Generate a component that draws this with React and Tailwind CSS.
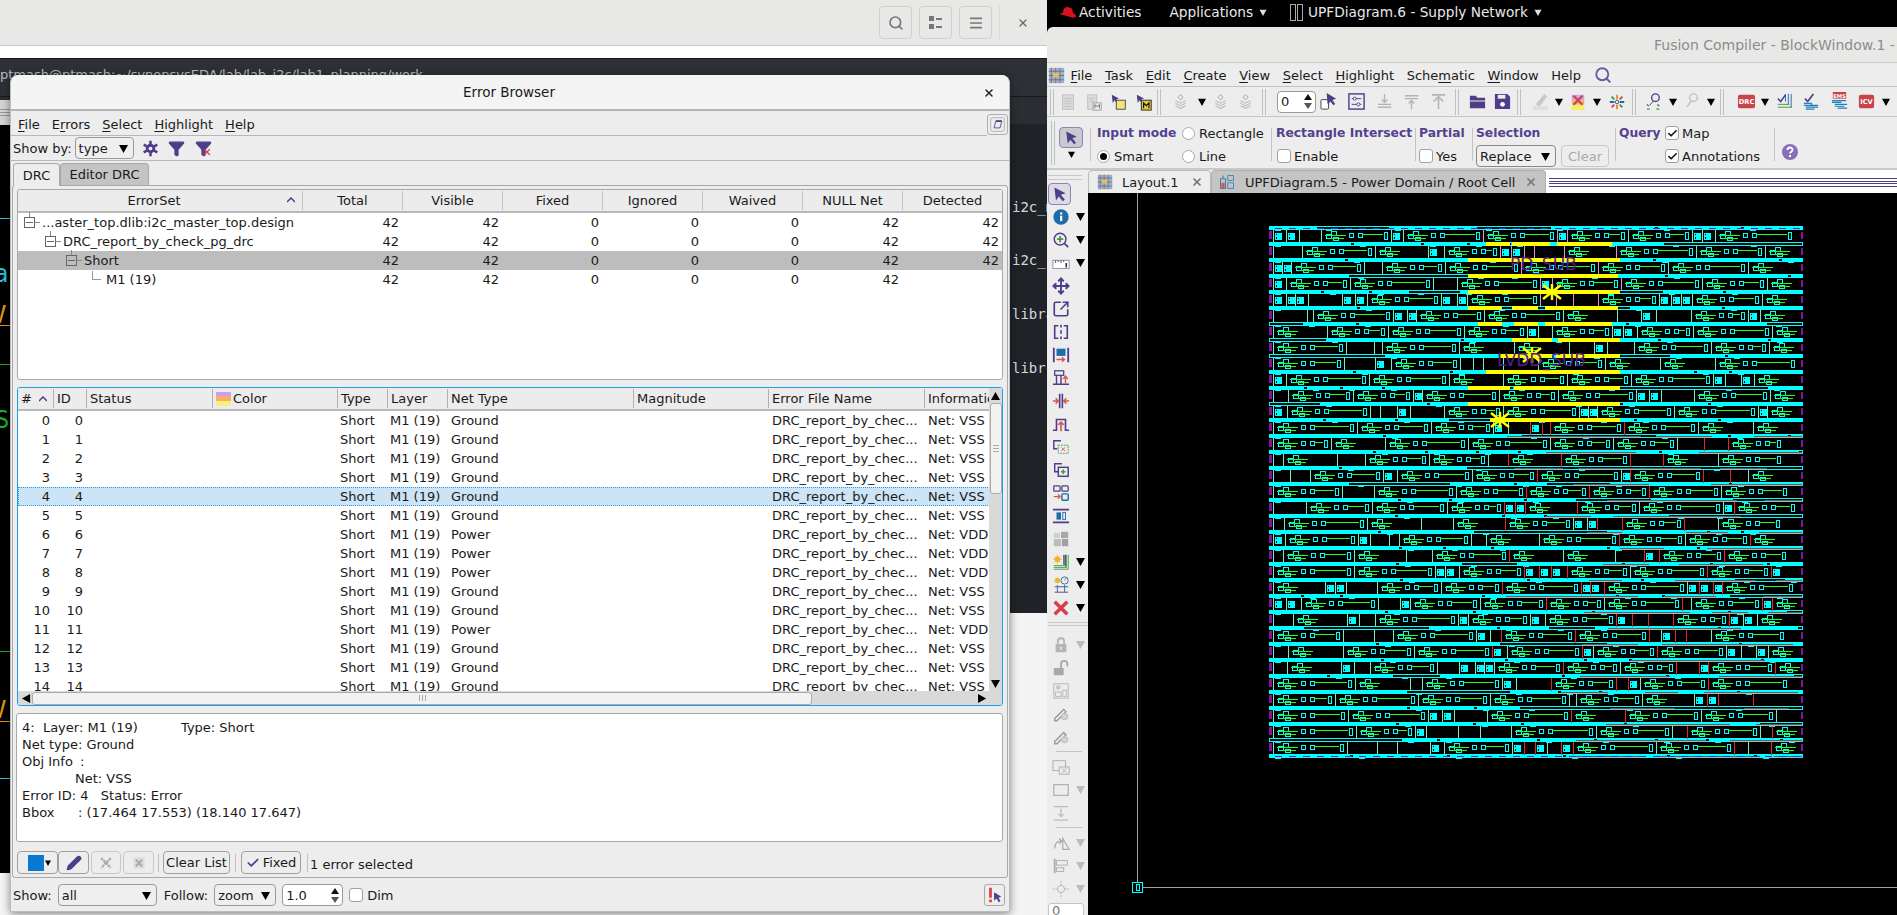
import React from 'react';
import { Search, Menu, X, Check, Move, SquareArrowOutUpRight, Pencil, Filter } from 'lucide-react';

const P = '#4f3d8a';

// ---- small drawn icons ----
const Svg = ({ s = 20, children, className = '' }) => (
  <svg width={s} height={s} viewBox="0 0 20 20" fill="none" className={`shrink-0 ${className}`}>{children}</svg>
);

const Tri = ({ c = '#000', w = 9, h = 9 }) => (
  <svg width={w} height={h} viewBox="0 0 10 10" className="shrink-0"><path d="M0 1h10L5 10z" fill={c} /></svg>
);

const badgeText = { fill: '#fff', fontSize: 7, fontWeight: 700, fontFamily: 'DejaVu Sans, sans-serif', textAnchor: 'middle' };

const icons = {
  arrow: <path d="M3 2l14 7-6 2 5 6-2.500 2-5-6-3.500 5z" fill={P} />,
  info: <><circle cx="10" cy="10" r="8.500" fill="#1f6ba8" /><rect x="9" y="8.500" width="2.400" height="6" fill="#fff" /><rect x="9" y="5" width="2.400" height="2.200" fill="#fff" /></>,
  zoom: <><circle cx="9" cy="9" r="6.500" stroke={P} strokeWidth="1.600" /><path d="M9 5.500v7M5.500 9h7" stroke="#3f9a3f" strokeWidth="2" /><path d="M14 14l4 4" stroke={P} strokeWidth="2" /></>,
  ruler: <><rect x="1" y="7" width="18" height="9" stroke="#8a8a9a" fill="#fff" /><path d="M4 7v3M7 7v2M10 7v3M13 7v2" stroke={P} /><rect x="15" y="10" width="1.600" height="5" fill="#222" /></>,
  split: <path d="M7 3H3v14h4M13 3h4v14h-4M10 2v3M10 8v4M10 15v3" stroke={P} strokeWidth="1.800" />,
  fit: <><path d="M2 2v16M18 2v16" stroke={P} strokeWidth="2" /><rect x="5" y="3" width="10" height="8" fill="#1f6ba8" /><path d="M5 15h9M11 12.500l3 2.500-3 2.500" stroke="#d9534f" strokeWidth="1.400" /></>,
  tree: <><rect x="3" y="2" width="10" height="5" stroke={P} strokeWidth="1.400" /><path d="M5 7v9M10 7v9M1 17h18" stroke={P} strokeWidth="1.600" /><path d="M15 16V8M12.500 11l2.500-3 2.500 3" stroke="#d9534f" strokeWidth="1.600" /></>,
  pinch: <><path d="M8.500 2v16M11.500 2v16" stroke={P} strokeWidth="1.800" /><path d="M1 10h5M4 7l3 3-3 3M19 10h-5M16 7l-3 3 3 3" stroke="#d9534f" strokeWidth="1.600" /></>,
  up: <><path d="M1 17h4V5h10v12h4" stroke={P} strokeWidth="1.800" /><path d="M10 18V8M7 11l3-3 3 3" stroke="#d9534f" strokeWidth="1.800" /></>,
  cutbox: <><path d="M10 3H2v9h4" stroke={P} strokeWidth="1.600" /><rect x="7" y="8" width="11" height="9" stroke="#4d9b4d" strokeDasharray="2 1" /><path d="M10.500 10.500l4 4M14.500 10.500l-4 4" stroke="#d9534f" /></>,
  addbox: <><path d="M11 3H3v9h4" stroke={P} strokeWidth="1.600" /><rect x="7" y="7" width="11" height="10" stroke={P} strokeWidth="1.600" /><path d="M12.500 9.500v5M10 12h5" stroke="#3f9a3f" strokeWidth="1.600" /></>,
  move2: <><rect x="2" y="2" width="7" height="6" rx="1" stroke={P} strokeWidth="1.400" /><rect x="11" y="2" width="7" height="6" rx="1" stroke={P} strokeWidth="1.400" /><rect x="11" y="11" width="7" height="7" rx="1" stroke="#1f6ba8" strokeWidth="1.600" /><path d="M2 14h7M6.500 11.500l2.500 2.500-2.500 2.500" stroke="#d9534f" strokeWidth="1.400" /></>,
  dist: <><path d="M1 3h18M1 17h18" stroke={P} strokeWidth="2" /><rect x="5" y="6" width="5" height="8" fill="#1f6ba8" /><rect x="12" y="6" width="3" height="8" stroke="#1f6ba8" /></>,
  grid: <><rect x="10" y="2" width="8" height="7" fill="#a8a8a8" /><rect x="2" y="10" width="8" height="8" fill="#bcbcbc" /><rect x="11" y="10" width="7" height="8" fill="#a0a0a0" /><rect x="2" y="3" width="7" height="6" fill="#d0d0d0" /></>,
  sunlines: <><circle cx="6" cy="7" r="3" fill="#f0b429" /><path d="M1 7h10M6 2v10M2.500 3.500l7 7M9.500 3.500l-7 7" stroke="#f0b429" /><path d="M2 14h12v-12M2 16h14V2M2 18h16V2" stroke="#3f9a3f" strokeWidth="1" /><path d="M13 2v11M15 2v13" stroke={P} /></>,
  sunpin: <><circle cx="6" cy="5" r="3" fill="#f0b429" /><circle cx="14" cy="5" r="4" stroke="#1f6ba8" /><path d="M14 5l2-3" stroke="#d9534f" /><path d="M3 12h15M3 18h15" stroke={P} /><path d="M6 10v8M14 10v8" stroke="#1f6ba8" /></>,
  redx: <path d="M3 3l14 14M17 3L3 17" stroke="#d5404a" strokeWidth="4" />,
  lock: <><rect x="4" y="9" width="12" height="9" rx="1" fill="#b4b4b4" /><path d="M6.500 9V6a3.500 3.500 0 017 0v3" stroke="#b4b4b4" strokeWidth="2" /><rect x="9" y="12" width="2" height="3" fill="#eee" /></>,
  unlock: <><rect x="2" y="10" width="11" height="8" rx="1" fill="#a8a8a8" /><path d="M10 10V5.500a3.500 3.500 0 017 0V8" stroke="#a8a8a8" strokeWidth="2" /></>,
  panel: <><rect x="2" y="2" width="16" height="16" stroke="#b4b4b4" /><circle cx="7" cy="6" r="2.500" fill="#c4c4c4" /><rect x="4" y="11" width="6" height="5" stroke="#b4b4b4" /><rect x="12" y="9" width="4" height="7" stroke="#b4b4b4" /></>,
  penx: <><path d="M3 15L13 5l2.500 2.500-10 10H3z" stroke="#999" strokeWidth="1.500" /><circle cx="14" cy="13" r="4" fill="#c4c4c4" /><path d="M12 11l4 4M16 11l-4 4" stroke="#eee" /></>,
  boxx: <><rect x="1" y="3" width="14" height="11" stroke="#aaa" /><rect x="8" y="10" width="11" height="8" stroke="#aaa" fill="#eee" /><path d="M11 11.500l5 5M16 11.500l-5 5" stroke="#aaa" /></>,
  rect: <rect x="2" y="4" width="16" height="12" stroke="#b0b0b0" strokeWidth="1.400" />,
  bottom: <path d="M2 3h16M2 18h16M10 5v9M7 11l3 3 3-3" stroke="#bbb" strokeWidth="1.400" />,
  flip: <path d="M3 16c0-6 3-8 7-8M8 5l3 3-3 3M12 17V5l7 12z" stroke="#aaa" strokeWidth="1.300" fill="none" />,
  align: <><path d="M3 2v16" stroke="#aaa" strokeWidth="2" /><rect x="5" y="4" width="12" height="5" stroke="#aaa" /><rect x="5" y="12" width="8" height="4" stroke="#aaa" /></>,
  target: <><circle cx="10" cy="10" r="4" stroke="#b4b4b4" /><path d="M1 10h5M14 10h5M10 1v5M10 14v5" stroke="#b4b4b4" strokeDasharray="2 1" /></>,
  doc: <><rect x="4" y="2" width="12" height="16" fill="#dcdcdc" stroke="#bdbdbd" /><path d="M6 6h8M6 9h8M6 12h8M6 15h8" stroke="#bdbdbd" /></>,
  docm: <><rect x="3" y="2" width="10" height="16" fill="#dcdcdc" stroke="#bdbdbd" /><path d="M5 6h6M5 9h6" stroke="#bdbdbd" /><rect x="9" y="11" width="9" height="8" fill="#eee" stroke="#999" /><path d="M11 17v-4l2.500 2 2.500-2v4" stroke="#666" /></>,
  yfile: <><path d="M2 2l8 4-3 1 3 4-2 1-3-4-2 3z" fill={P} /><rect x="7" y="8" width="10" height="10" fill="#f2e37a" stroke="#444" /></>,
  mfile: <><path d="M2 2l8 4-3 1 3 4-2 1-3-4-2 3z" fill={P} /><rect x="7" y="8" width="11" height="11" fill="#e3c93b" stroke="#222" /><path d="M9.500 17v-6l3 3 3-3v6" stroke="#111" strokeWidth="1.300" /></>,
  layers: <path d="M10 2l3 3-3 3-3-3zM4 9l6 3 6-3M4 12l6 3 6-3M4 15l6 3 6-3" stroke="#bdbdbd" strokeWidth="1.300" />,
  sel: <><rect x="1" y="8" width="8" height="10" rx="1" stroke="#444" fill="#fff" /><path d="M7 1l10 6-4 1.500 3 4-2 1.500-3-4-3 3z" fill={P} /></>,
  box: <><rect x="2" y="2" width="16" height="16" stroke={P} strokeWidth="1.500" /><path d="M5 7h10M5 13h10" stroke={P} /><circle cx="8" cy="7" r="1.600" fill="#fff" stroke={P} /><circle cx="12" cy="13" r="1.600" fill="#fff" stroke={P} /></>,
  down: <path d="M10 2v9M7 8l3 3 3-3M3 13h14M3 16h14" stroke="#b4b4b4" strokeWidth="1.500" />,
  upl: <path d="M3 4h14M3 7h14M10 18V9M7 12l3-3 3 3" stroke="#b4b4b4" strokeWidth="1.500" />,
  top: <path d="M3 3h14M10 18V5M5 10l5-5 5 5" stroke="#b4b4b4" strokeWidth="1.700" />,
  folder: <path d="M2 4h6l2 2h8v3H2zM2 10h16v7H2z" fill={P} />,
  save: <><path d="M2 2h13l3 3v13H2z" fill={P} /><circle cx="10" cy="13" r="2.500" fill="#fff" /><rect x="5" y="3" width="8" height="4" fill="#eee" /></>,
  pen: <><path d="M5 13L14 2l3 2.500-8 11z" fill="#c8c8c8" /><rect x="2" y="15" width="16" height="4" fill="#dedede" /></>,
  colorx: <><rect x="3" y="2" width="14" height="6" fill="#c9a6e8" /><rect x="3" y="8" width="14" height="5" fill="#f0b27a" /><rect x="3" y="13" width="14" height="6" fill="#f4ec6c" /><path d="M5 3l10 10M15 3L5 13" stroke="#d5404a" strokeWidth="2.500" /></>,
  star: <><path d="M10 2v5M10 13v5" stroke="#e08a1e" strokeWidth="2" /><path d="M2 10h5M13 10h5" stroke="#1f6ba8" strokeWidth="2" /><path d="M4 4l3 3M13 13l3 3" stroke="#3f9a3f" strokeWidth="2" /><path d="M16 4l-3 3M7 13l-3 3" stroke="#d5404a" strokeWidth="2" /><circle cx="10" cy="10" r="2" stroke={P} /></>,
  findg: <><circle cx="11" cy="6" r="4" stroke={P} strokeWidth="1.400" /><path d="M9 9l-4 5" stroke={P} /><path d="M2 13l2 2M13 13l2 2M2 18h3M12 18h3" stroke="#3f9a3f" strokeWidth="1.500" /></>,
  find: <><circle cx="11" cy="6" r="4" stroke="#c0c0c0" strokeWidth="1.400" /><path d="M9 9l-5 7" stroke="#c0c0c0" strokeWidth="1.500" /></>,
  drc: <><rect x="1" y="3" width="18" height="14" rx="2" fill="#c8444a" /><text x="10" y="13" style={badgeText}>DRC</text></>,
  chk1: <><path d="M3 16h15M3 13h12" stroke="#3f9a3f" /><path d="M17 2v14M14 2v11M11 2v8" stroke="#1f6ba8" /><path d="M3 7l3 3 5-7" stroke={P} strokeWidth="1.600" /></>,
  chk2: <><path d="M3 7l3 3 6-8" stroke={P} strokeWidth="1.800" /><path d="M2 12h8v2H2M8 14h9M4 16h13M4 18h9" stroke="#1f7fc0" strokeWidth="1.400" /></>,
  ems: <><rect x="3" y="0" width="14" height="7" fill="#c8444a" /><text x="10" y="6" style={{ ...badgeText, fontSize: 5.500 }}>EMS</text><path d="M2 9h15M2 11h10M5 13h13M5 15h10M8 17h10" stroke="#1f7fc0" strokeWidth="1.300" /></>,
  icv: <><rect x="2" y="3" width="16" height="14" rx="2" fill="#c8444a" /><text x="10" y="13" style={badgeText}>ICV</text></>,
  gear: <><circle cx="10" cy="10" r="5.500" fill={P} /><path d="M10 1v18M2 5.500l16 9M18 5.500l-16 9" stroke={P} strokeWidth="3" /><circle cx="10" cy="10" r="2.200" fill="#eee" /></>,
  layout: <><rect x="1" y="1" width="18" height="18" fill="#9db3c8" /><path d="M4 1v18M9 1v18M14 1v18" stroke="#c0554f" /><path d="M1 5h18M1 10h18M1 15h18" stroke="#3c78a8" /><rect x="6" y="7" width="7" height="5" fill="#e9b86a" /></>,
  upf: <><rect x="2" y="6" width="6" height="12" stroke="#1f6ba8" /><rect x="3" y="11" width="4" height="7" fill="#d9534f" /><rect x="4" y="2" width="2" height="3" fill="#888" /><rect x="11" y="2" width="7" height="6" stroke="#1f7fc0" /><rect x="11" y="11" width="7" height="7" stroke="#1f7fc0" /></>,
  undock: <><rect x="2" y="2" width="16" height="16" rx="2" stroke="#aaa" /><path d="M6 14l2-8h7l-2 8z" stroke={P} /><path d="M8 6h7" stroke={P} strokeWidth="2" /></>,
  flagarrow: <><path d="M5 2v11M5 15v3" stroke="#d5404a" strokeWidth="3" /><path d="M9 7l8 5-3 1 2 4-2 1-2-4-3 2z" fill="#4f3d8a" /></>,
  xgray: <path d="M4 4l12 12M16 4L4 16" stroke="#aaa" strokeWidth="3" strokeDasharray="3 1" />,
  xbox: <><rect x="3" y="3" width="14" height="14" fill="#ddd" /><path d="M6 6l8 8M14 6l-8 8" stroke="#aaa" strokeWidth="2.500" /></>,
};

const Ico = ({ n, s = 20 }) => <Svg s={s}>{icons[n]}</Svg>;

// ---- little form bits ----
const U = ({ children }) => <span className="underline underline-offset-2">{children}</span>;

const Combo = ({ w, label, className = '' }) => (
  <div className={`${w} h-[22px] flex items-center justify-between pl-[3px] pr-[5px] border border-[#9a9a9a] rounded-[4px] bg-[#efefef] ${className}`}>
    <span>{label}</span>
    <Tri />
  </div>
);

const CheckBox = ({ on }) => (
  <span className="w-[14px] h-[14px] shrink-0 flex items-center justify-center bg-white border border-[#a0a0a0] rounded-[3px]">
    {on && <Check size={11} strokeWidth={3.5} color="#111" />}
  </span>
);

const Radio = ({ on }) => (
  <span className="w-[13px] h-[13px] shrink-0 flex items-center justify-center bg-white border border-[#a8a8a8] rounded-full">
    {on && <span className="w-[7px] h-[7px] rounded-full bg-black" />}
  </span>
);

const Spin = ({ w, value }) => (
  <div className={`${w} h-[22px] flex items-center justify-between pl-[3px] pr-[2px] bg-white border border-[#9a9a9a] rounded-[4px]`}>
    <span>{value}</span>
    <div className="flex flex-col gap-[3px] items-center w-[10px]">
      <svg width="8" height="6" viewBox="0 0 8 6"><path d="M0 6h8L4 0z" fill="#111" /></svg>
      <svg width="8" height="6" viewBox="0 0 8 6"><path d="M0 0h8L4 6z" fill="#555" /></svg>
    </div>
  </div>
);

// ---- Error Browser data ----
const setCols = ['Total', 'Visible', 'Fixed', 'Ignored', 'Waived', 'NULL Net', 'Detected'];

const setRows = [
  { label: '...aster_top.dlib:i2c_master_top.design', pad: 'pl-[6px]', box: true, vals: ['42', '42', '0', '0', '0', '42', '42'] },
  { label: 'DRC_report_by_check_pg_drc', pad: 'pl-[27px]', box: true, vals: ['42', '42', '0', '0', '0', '42', '42'] },
  { label: 'Short', pad: 'pl-[48px]', box: true, sel: true, vals: ['42', '42', '0', '0', '0', '42', '42'] },
  { label: 'M1 (19)', pad: 'pl-[87px]', vals: ['42', '42', '0', '0', '0', '42', ''] },
];

const errTemplate = 'grid-cols-[35px_33px_126px_125px_50px_60px_186px_135px_156px_66px]';
const errHead = ['#', 'ID', 'Status', 'Color', 'Type', 'Layer', 'Net Type', 'Magnitude', 'Error File Name', 'Information'];
const nets = ['Ground', 'Ground', 'Ground', 'Ground', 'Ground', 'Ground', 'Power', 'Power', 'Power', 'Ground', 'Ground', 'Power', 'Ground', 'Ground', 'Ground'];

const TreeBox = () => (
  <span className="relative w-[11px] h-[11px] border border-[#666] shrink-0 flex items-center justify-center mr-[1px]">
    <span className="w-[7px] h-px bg-[#666]" />
    <span className="absolute -top-[6px] left-[4px] w-px h-[5px] bg-[#888]" />
    <span className="absolute top-[4px] -right-[6px] w-[5px] h-px bg-[#888]" />
  </span>
);

const SetTable = () => (
  <div className="h-[191px] shrink-0 bg-white border border-[#a8a8a8] rounded-[3px] overflow-hidden">
    <div className="grid grid-cols-[284px_repeat(7,100px)] h-[23px] bg-[#ececec] border-b-2 border-[#b8b8b8] items-center">
      <div className="relative h-[19px] flex items-center justify-center pr-[12px]">
        ErrorSet
        <svg width="8" height="6" viewBox="0 0 8 6" className="absolute right-[7px] top-[6px]"><path d="M0 5l4-4 4 4" stroke={P} strokeWidth="1.500" fill="none" /></svg>
      </div>
      {setCols.map((c) => (
        <div key={c} className="flex items-center justify-center border-l border-[#c4c4c4] h-[19px]">{c}</div>
      ))}
    </div>
    {setRows.map((r) => (
      <div key={r.label} className={`grid grid-cols-[284px_repeat(7,100px)] h-[19px] items-center ${r.sel ? 'bg-[#bdbdbd]' : ''}`}>
        <div className={`flex items-center ${r.pad}`}>
          {r.box ? <TreeBox /> : <span className="w-[9px] h-[9px] mr-[5px] -mt-[8px] border-l border-b border-[#999] -ml-[13px] shrink-0" />}
          <span className={r.box ? 'ml-[6px]' : ''}>{r.label}</span>
        </div>
        {r.vals.map((v, i) => (
          <div key={i} className="text-right pr-[3px]">{v}</div>
        ))}
      </div>
    ))}
  </div>
);

const ErrTable = () => (
  <div className="relative h-[319px] mt-[7px] shrink-0 bg-white border border-[#1a9fe8] rounded-[3px] overflow-hidden">
    <div className={`grid ${errTemplate} h-[23px] bg-[#ececec] border-b-2 border-[#b8b8b8] items-center`}>
      {errHead.map((h, i) => (
        <div key={h} className={`relative h-[19px] pl-[3px] flex items-center overflow-hidden whitespace-nowrap ${i ? 'border-l border-[#b0b0b0]' : ''}`}>
          {h === 'Color' && (
            <span className="flex flex-col shrink-0 w-[15px] h-[14px] mr-[2px] rounded-[1px] overflow-hidden">
              <span className="flex-1 bg-[#d39af0]" />
              <span className="flex-1 bg-[#f4b070]" />
              <span className="flex-1 bg-[#f6f07a]" />
            </span>
          )}
          {h}
          {h === '#' && (
            <svg width="8" height="6" viewBox="0 0 8 6" className="absolute right-[6px] top-[7px]"><path d="M0 5l4-4 4 4" stroke={P} strokeWidth="1.500" fill="none" /></svg>
          )}
        </div>
      ))}
    </div>
    <div className="h-[281px] overflow-hidden">
      {nets.map((net, i) => (
        <div key={i} className={`grid ${errTemplate} h-[19px] items-center whitespace-nowrap ${i === 4 ? 'bg-[#cde4f7] outline-1 -outline-offset-1 outline-dotted outline-[#1a9fe8]' : ''}`}>
          <div className="text-right pr-[3px]">{i}</div>
          <div className="text-right pr-[3px]">{i}</div>
          <div />
          <div />
          <div className="pl-[3px]">Short</div>
          <div className="pl-[3px]">M1 (19)</div>
          <div className="pl-[4px]">{net}</div>
          <div />
          <div className="pl-[4px]">DRC_report_by_chec...</div>
          <div className="pl-[4px]">Net: {net === 'Ground' ? 'VSS' : 'VDD'}</div>
        </div>
      ))}
    </div>
    {/* vertical scrollbar */}
    <div className="absolute top-0 right-0 bottom-0 w-[13px] bg-[#d9d9d9] flex flex-col items-center">
      <svg width="9" height="9" viewBox="0 0 10 10" className="mt-[4px] shrink-0"><path d="M0 9h10L5 0z" fill="#000" /></svg>
      <div className="mt-[2px] w-[12px] h-[91px] bg-[#f2f2f2] border border-[#aaa] rounded-[3px] flex flex-col gap-[2px] items-center justify-center shrink-0">
        <span className="w-[6px] h-px bg-[#aaa]" />
        <span className="w-[6px] h-px bg-[#aaa]" />
        <span className="w-[6px] h-px bg-[#aaa]" />
      </div>
      <div className="mt-auto mb-[17px]"><Tri /></div>
    </div>
    {/* horizontal scrollbar */}
    <div className="absolute left-0 right-[13px] bottom-0 h-[14px] bg-[#d9d9d9] flex items-center">
      <svg width="9" height="9" viewBox="0 0 10 10" className="ml-[4px] shrink-0"><path d="M9 0v10L0 5z" fill="#000" /></svg>
      <div className="ml-[1px] w-[780px] h-[13px] bg-[#f2f2f2] border border-[#aaa] rounded-[3px] flex gap-[2px] items-center justify-center shrink-0">
        <span className="w-px h-[6px] bg-[#aaa]" />
        <span className="w-px h-[6px] bg-[#aaa]" />
        <span className="w-px h-[6px] bg-[#aaa]" />
      </div>
      <svg width="9" height="9" viewBox="0 0 10 10" className="ml-auto mr-[2px] shrink-0"><path d="M0 0v10l9-5z" fill="#000" /></svg>
    </div>
  </div>
);

const Details = () => (
  <div className="h-[129px] mt-[7px] -ml-px shrink-0 bg-white border border-[#a8a8a8] rounded-[3px] pt-[5px] pl-[5px] whitespace-pre leading-[17px]">
    <div><span className="inline-block w-[159px]">4:  Layer: M1 (19)</span>Type: Short</div>
    <div>Net type: Ground</div>
    <div><span className="inline-block w-[58px]">Obj Info</span>:</div>
    <div className="pl-[53px]">Net: VSS</div>
    <div>Error ID: 4   Status: Error</div>
    <div><span className="inline-block w-[56px]">Bbox</span>: (17.464 17.553) (18.140 17.647)</div>
  </div>
);

const ActionBtn = ({ w, children, off }) => (
  <div className={`${w} h-[23px] flex items-center justify-center border rounded-[4px] ${off ? 'border-[#c8c8c8]' : 'border-[#a0a0a0]'}`}>{children}</div>
);

const ErrorBrowser = () => (
  <div className="absolute left-[10px] top-[75px] w-[1000px] h-[837px] flex flex-col bg-[#ededed] rounded-t-lg shadow-[0_2px_8px_rgba(0,0,0,0.45)] border-x border-b border-[#bdbdbd]">
    {/* title */}
    <div className="relative h-[36px] shrink-0 flex items-center justify-center pt-[2px] pr-[2px] bg-[#f4f4f4] border-b-2 border-[#b4b4b4] rounded-t-lg text-[13.5px]">
      Error Browser
      <X size={12} strokeWidth={3} className="absolute right-[14px] top-[12px]" color="#222" />
    </div>
    {/* menu */}
    <div className="relative h-[25px] shrink-0 flex items-center gap-[12px] pl-[7px] pt-[2px] mr-[22px] border-b border-[#b8b8b8]">
      <span><U>F</U>ile</span>
      <span>E<U>r</U>rors</span>
      <span><U>S</U>elect</span>
      <span><U>H</U>ighlight</span>
      <span><U>H</U>elp</span>
      <div className="absolute -right-[21px] top-[3px] w-[21px] h-[21px] flex items-center justify-center border border-[#b0b0b0] rounded-[3px]"><Ico n="undock" s={17} /></div>
    </div>
    {/* show by */}
    <div className="h-[25px] shrink-0 flex items-center pl-[2px] border-b border-[#b8b8b8]">
      <span className="mr-[3px]">Show by:</span>
      <Combo w="w-[59px]" label="type" />
      <span className="ml-[8px]"><Ico n="gear" s={17} /></span>
      <Filter size={17} fill={P} color={P} className="ml-[9px]" />
      <span className="relative ml-[10px]">
        <Filter size={17} fill={P} color={P} />
        <X size={10} strokeWidth={3} color="#d5404a" className="absolute right-0 bottom-0" />
      </span>
    </div>
    {/* tabs */}
    <div className="h-[23px] mt-px shrink-0 flex items-end pl-[2px]">
      <div className="w-[47px] h-[23px] flex items-center justify-center border border-b-0 border-[#a8a8a8] rounded-t-[4px] bg-[#ededed] relative top-px z-10">DRC</div>
      <div className="w-[89px] h-[22px] flex items-center justify-center border border-b-0 border-[#a8a8a8] rounded-t-[4px] bg-[#c4c4c4]">Editor DRC</div>
    </div>
    {/* tab panel */}
    <div className="h-[693px] shrink-0 mx-px px-[4px] pt-[3px] flex flex-col border border-[#a8a8a8] rounded-[3px]">
      <SetTable />
      <ErrTable />
      <Details />
      <div className="flex items-center mt-[9px] h-[23px]">
        <ActionBtn w="w-[41px]">
          <span className="w-[16px] h-[16px] bg-[#0a78d2] ml-[3px]" />
          <span className="ml-[1px]"><Tri w={6} h={6} /></span>
        </ActionBtn>
        <ActionBtn w="w-[31px]"><Pencil size={16} fill={P} color={P} /></ActionBtn>
        <span className="w-[2px]" />
        <ActionBtn w="w-[30px]" off><Ico n="xgray" s={16} /></ActionBtn>
        <span className="w-[2px]" />
        <ActionBtn w="w-[31px]" off><Ico n="xbox" s={16} /></ActionBtn>
        <span className="w-px h-[18px] bg-[#c0c0c0] mx-[4px]" />
        <ActionBtn w="w-[67px]">Clear List</ActionBtn>
        <span className="w-px h-[18px] bg-[#c0c0c0] mx-[5px]" />
        <ActionBtn w="w-[60px]"><Check size={14} strokeWidth={3} color={P} className="mr-[3px]" />Fixed</ActionBtn>
        <span className="w-px h-[18px] bg-[#c0c0c0] mx-[6px]" />
        <span className="mt-[4px] -ml-[4px]">1 error selected</span>
      </div>
    </div>
    {/* bottom */}
    <div className="flex-1 flex items-center pl-[2px] pt-[1px]">
      <span className="mr-[6px]">Show:</span>
      <Combo w="w-[99px]" label="all" />
      <span className="ml-[7px] mr-[6px]">Follow:</span>
      <Combo w="w-[62px]" label="zoom" />
      <span className="ml-[6px]"><Spin w="w-[61px]" value="1.0" /></span>
      <span className="ml-[6px]"><CheckBox /></span>
      <span className="ml-[4px]">Dim</span>
      <div className="ml-auto mr-[4px] w-[21px] h-[22px] flex items-center justify-center border border-[#aaa] rounded-[3px]"><Ico n="flagarrow" s={18} /></div>
    </div>
  </div>
);

// ---- left desktop ----
const LeftDesktop = () => (
  <div className="relative w-[1047px] h-full shrink-0 overflow-hidden bg-[#f4f4f4]">
    <div className="h-[46px] flex items-center justify-end border-b border-[#c8c8c8] bg-[#e8e8e7] text-[#555]">
      <div className="flex gap-[7px] items-center">
        <div className="w-[33px] h-[33px] flex items-center justify-center border border-[#d0d0d0] rounded-[4px]"><Search size={16} strokeWidth={2.5} color="#777" /></div>
        <div className="w-[33px] h-[33px] flex flex-col gap-[3px] items-center justify-center border border-[#d0d0d0] rounded-[4px]">
          <span className="flex gap-[2px] items-center"><span className="w-[5px] h-[5px] bg-[#777]" /><span className="w-[6px] h-[2px] bg-[#777]" /></span>
          <span className="flex gap-[2px] items-center"><span className="w-[5px] h-[5px] bg-[#777]" /><span className="w-[6px] h-[2px] bg-[#777]" /></span>
        </div>
        <div className="w-[33px] h-[33px] flex items-center justify-center border border-[#d0d0d0] rounded-[4px]"><Menu size={16} strokeWidth={2.5} color="#777" /></div>
      </div>
      <span className="w-px h-[33px] bg-[#d8d8d8] mx-[7px]" />
      <X size={12} strokeWidth={2.5} color="#666" className="mr-[18px] ml-[10px]" />
    </div>
    <div className="h-[12px] bg-white" />
    {/* terminal behind */}
    <div className="h-[555px] bg-[#1f2327] border-t border-[#17191c]">
      <div className="h-[38px] bg-[#2d3136] border-b border-[#17191c] pt-[9px] text-[#b9bcbf] whitespace-nowrap">ptmash@ptmash:~/synopsysEDA/lab/lab_i2c/lab1_planning/work</div>
      <div className="h-[27px] bg-[#2a2e33]" />
      <div className="relative text-[#d6d8da] text-[14px] font-['DejaVu_Sans_Mono',monospace]">
        <span className="absolute left-[1012px] top-[76px]">i2c_m</span>
        <span className="absolute left-[1012px] top-[129px]">i2c_</span>
        <span className="absolute left-[1012px] top-[183px]">libra</span>
        <span className="absolute left-[1012px] top-[237px]">libr</span>
      </div>
    </div>
    {/* black strip left of the dialog */}
    <div className="absolute left-0 top-[100px] w-[11px] h-[25px] bg-[#d4d4d4] flex flex-col gap-[2px] justify-center">
      <span className="h-px bg-[#999]" />
      <span className="h-px bg-[#999]" />
      <span className="h-px bg-[#999]" />
    </div>
    <div className="absolute left-0 top-[125px] w-[11px] h-[748px] bg-black overflow-hidden font-['DejaVu_Sans_Mono',monospace] text-[24px] leading-none">
      <span className="absolute left-0 right-0 top-[93px] h-px bg-[#22c8d8]" />
      <span className="absolute -left-[6px] top-[137px] text-[#22c8d8]">a</span>
      <span className="absolute -left-[8px] top-[178px] text-[#e09a10]">V</span>
      <span className="absolute left-0 right-0 top-[200px] h-px bg-[#e09a10]" />
      <span className="absolute left-0 right-0 top-[239px] h-px bg-[#18b030]" />
      <span className="absolute -left-[5px] top-[283px] text-[#18b030]">S</span>
      <span className="absolute left-0 right-0 top-[526px] h-px bg-[#18b030]" />
      <span className="absolute -left-[8px] top-[573px] text-[#e09a10]">V</span>
      <span className="absolute left-0 right-0 top-[596px] h-px bg-[#e09a10]" />
      <span className="absolute left-0 right-0 top-[653px] h-px bg-[#22c8d8]" />
    </div>
    <ErrorBrowser />
  </div>
);

// ---- layout canvas (generated standard-cell picture) ----
const rng = (seed) => () => {
  seed |= 0; seed = (seed + 0x6d2b79f5) | 0;
  let t = Math.imul(seed ^ (seed >>> 15), 1 | seed);
  t = (t + Math.imul(t ^ (t >>> 7), 61 | t)) ^ t;
  return ((t ^ (t >>> 14)) >>> 0) / 4294967296;
};

const yellowRails = [
  [244, [[1486, 1510], [1512, 1550], [1557, 1612]]],
  [260, [[1468, 1620]]],
  [276, [[1468, 1618]]],
  [292, [[1468, 1620]]],
  [308, [[1468, 1502], [1512, 1538], [1545, 1618]]],
  [324, [[1478, 1502], [1514, 1538], [1545, 1612]]],
  [340, [[1512, 1552], [1558, 1620]]],
  [356, [[1500, 1552], [1556, 1620]]],
  [372, [[1486, 1620]]],
  [388, [[1468, 1510], [1514, 1620]]],
  [404, [[1468, 1620]]],
  [420, [[1490, 1620]]],
];

const buildLayout = () => {
  const r = rng(11);
  const d = { cyan: '', line: '', green: '', pale: '', red: '', pink: '', mag: '', yellow: '', yel: '' };
  const R = (k, x, y, w, h) => { d[k] += `M${x} ${y}h${w}v${h}h${-w}z`; };
  const B = (x, y, w, h) => { d.line += `M${x + 0.5} ${y + 0.5}h${w}v${h}h${-w}z`; };

  for (let i = 0; i < 33; i++) {
    const top = 228 + i * 16;
    const mid = top + 8;
    let x = 1273;
    const sepCol = (sx) => {
      if (sx > 1480 && sx < 1622 && top < 300) return 'pink';
      if (sx > 1490 && top >= 420 && r() < 0.55) return 'red';
      return 'pale';
    };
    while (x < 1780) {
      const t = r();
      if (t < 0.5) {
        const w = Math.min(52 + Math.floor(r() * 34), 1798 - x);
        R(sepCol(x), x, top + 2, 1, 13);
        // blob: a few pins tied with green
        B(x + 5, mid - 2, 5, 4);
        B(x + 10, mid - 5, 5, 4);
        B(x + 12, mid + 1, 5, 3);
        R('green', x + 4, mid - 1, 21, 1);
        R('green', x + 9, mid + 2, 14, 1);
        if (w > 55) {
          B(x + 28, mid - 3, 4, 4);
          B(x + 37, mid - 3, 4, 4);
          R('green', x + 42, mid - 2, Math.max(w - 50, 5), 1);
          B(x + w - 7, mid - 4, 3, 7);
        }
        x += w;
      } else if (t < 0.75) {
        const w = 9 + Math.floor(r() * 8);
        R(sepCol(x), x, top + 2, 1, 13);
        B(x + 2, mid - 3, 2, 6);
        R('cyan', x + 5, mid - 3, 4, 7);
        R('cyan', x + 3, mid - 1, 6, 2);
        x += w;
      } else {
        const w = 6 + Math.floor(r() * 30);
        R(sepCol(x), x, top + 2, 1, 13);
        x += w;
      }
    }
    R('mag', 1269, top + 3, 3, 8);
    R('mag', 1801, top + 4, 2, 7);
  }

  for (let i = 0; i <= 33; i++) {
    const y = 228 + i * 16;
    B(1269, y - 2, 533, 3);
    let x = 1269;
    while (x < 1795) {
      const w = 30 + Math.floor(r() * 110);
      const seg = Math.min(w, 1803 - x);
      if (r() < 0.85) R('cyan', x, y - 1, seg, 2);
      if (x + 12 < 1800) R('cyan', x + 6, y + 1, 6, 2);
      x += w + 3;
    }
    if (y >= 436) {
      let rx = 1500 + Math.floor(r() * 140);
      while (rx < 1790) {
        const w = Math.min(30 + Math.floor(r() * 110), 1802 - rx);
        R('red', rx, y, w, 1);
        rx += w + 10 + Math.floor(r() * 60);
      }
    }
    if (i === 0 || i === 33) {
      for (let m = 1275; m < 1795; m += 14) R('mag', m, y, 7, 1);
    }
  }

  yellowRails.forEach(([y, segs]) => segs.forEach(([a, b]) => R('yellow', a, y - 2, b - a, 4)));

  // violation crosses
  [[1552, 292], [1532, 355], [1500, 420]].forEach(([x, y]) => {
    d.yel += `M${x - 9} ${y - 7}L${x + 9} ${y + 7}M${x + 9} ${y - 7}L${x - 9} ${y + 7}M${x} ${y - 8}V${y + 8}M${x - 10} ${y}H${x + 10}`;
  });
  return d;
};

const layoutPaths = buildLayout();

const LayoutCanvas = () => (
  <svg width="809" height="722" viewBox="1088 193 809 722" className="block bg-black" shapeRendering="crispEdges">
    <path d="M1137.500 193V882M1143 887.500H1897" stroke="#a0a0a0" />
    <rect x="1132.500" y="882.500" width="10" height="10" fill="none" stroke="#00ffff" />
    <rect x="1136.500" y="884.500" width="3" height="6" fill="none" stroke="#00ffff" />
    <path d={layoutPaths.pale} fill="#6ff0c0" />
    <path d={layoutPaths.pink} fill="#e090e0" />
    <path d={layoutPaths.line} fill="none" stroke="#00ffff" />
    <path d={layoutPaths.cyan} fill="#00ffff" />
    <path d={layoutPaths.green} fill="#20ff20" />
    <path d={layoutPaths.red} fill="#f02020" />
    <path d={layoutPaths.mag} fill="#8a10a0" />
    <path d={layoutPaths.yellow} fill="#ffff00" />
    <path d={layoutPaths.yel} stroke="#ffff00" strokeWidth="2.500" fill="none" shapeRendering="auto" />
    <text x="1510" y="270" fill="#5a1a8c" fontSize="17" fontFamily="DejaVu Sans, sans-serif">PD_SUB</text>
    <text x="1497" y="366" fill="#5a1a8c" fontSize="17" fontFamily="DejaVu Sans, sans-serif">LVDD_SUB</text>
  </svg>
);

// ---- right window toolbars ----
const Sep = ({ className = '' }) => (
  <span className={`flex gap-[2px] h-[26px] shrink-0 ${className}`}>
    <span className="w-px bg-[#c0c0c0]" />
    <span className="w-px bg-[#c0c0c0]" />
  </span>
);

const T = ({ w, n, s = 20, arrow, off }) => (
  <span className={`${w} shrink-0 flex items-center justify-center`}>
    {n && <Ico n={n} s={s} />}
    {arrow && <Tri c={off ? '#b8b8b8' : '#000'} w={8} h={8} />}
  </span>
);

const TopToolbar = () => (
  <div className="h-[30px] shrink-0 flex items-center pl-[3px] border-b border-[#c4c4c4]">
    <Sep />
    <T w="w-[26px] ml-[1px]" n="doc" s={18} />
    <T w="w-[26px]" n="docm" s={18} />
    <T w="w-[24px]" n="yfile" s={18} />
    <T w="w-[25px]" n="mfile" s={18} />
    <Sep className="ml-[1px]" />
    <T w="w-[29px] ml-[5px]" n="layers" s={17} />
    <T w="w-[14px]" arrow />
    <T w="w-[23px]" n="layers" s={17} />
    <T w="w-[27px]" n="layers" s={17} />
    <Sep className="ml-[3px]" />
    <span className="ml-[11px]"><Spin w="w-[39px]" value="0" /></span>
    <T w="w-[26px]" n="sel" s={19} />
    <T w="w-[28px]" n="box" s={19} />
    <T w="w-[28px]" n="down" s={19} />
    <T w="w-[27px]" n="upl" s={19} />
    <T w="w-[27px]" n="top" s={19} />
    <Sep className="ml-[3px]" />
    <T w="w-[25px] ml-[6px]" n="folder" s={19} />
    <T w="w-[24px]" n="save" s={19} />
    <Sep className="ml-[3px]" />
    <T w="w-[26px] ml-[6px]" n="pen" s={19} />
    <T w="w-[12px]" arrow />
    <T w="w-[26px]" n="colorx" s={18} />
    <T w="w-[12px]" arrow />
    <T w="w-[26px] ml-[1px]" n="star" s={18} />
    <Sep className="ml-[2px]" />
    <T w="w-[24px] ml-[6px]" n="findg" s={19} />
    <T w="w-[14px]" arrow />
    <T w="w-[24px]" n="find" s={19} />
    <T w="w-[14px]" arrow />
    <Sep className="ml-[2px]" />
    <T w="w-[26px] ml-[9px]" n="drc" s={19} />
    <T w="w-[12px]" arrow />
    <T w="w-[27px]" n="chk1" s={19} />
    <T w="w-[27px]" n="chk2" s={19} />
    <T w="w-[28px]" n="ems" s={19} />
    <T w="w-[26px]" n="icv" s={19} />
    <T w="w-[14px]" arrow />
  </div>
);

const Title = ({ children }) => <div className="font-bold text-[12.3px] text-[#54418e] whitespace-nowrap">{children}</div>;
const VLine = ({ className = '' }) => <span className={`w-px h-[33px] bg-[#c4c4c4] shrink-0 ${className}`} />;
const Field = ({ children, className = '' }) => <div className={`h-[23px] flex items-center gap-[3px] whitespace-nowrap ${className}`}>{children}</div>;

const ModeBar = () => (
  <div className="h-[53px] shrink-0 flex items-center border-b-2 border-[#c8c8c8] pl-[4px] pt-[4px]">
    <Sep className="h-[44px] -mt-[4px]" />
    <div className="ml-[4px] -mt-[4px] w-[24px] flex flex-col items-center">
      <div className="w-[24px] h-[21px] flex items-center justify-center bg-[#c9c9d2] border border-[#8d84b4] rounded-[4px]"><Ico n="arrow" s={15} /></div>
      <span className="mt-[3px]"><Tri w={7} h={7} /></span>
    </div>
    <VLine className="ml-[7px]" />
    <div className="ml-[6px] w-[174px] grid grid-cols-[85px_87px]">
      <Field><Title>Input mode</Title></Field>
      <Field className="gap-[4px]"><Radio />Rectangle</Field>
      <Field className="gap-[4px]"><Radio on />Smart</Field>
      <Field className="gap-[4px]"><Radio />Line</Field>
    </div>
    <VLine />
    <div className="ml-[4px] w-[139px]">
      <Field><Title>Rectangle Intersect</Title></Field>
      <Field className="gap-[2px] ml-px"><CheckBox />Enable</Field>
    </div>
    <VLine />
    <div className="ml-[3px] w-[53px]">
      <Field><Title>Partial</Title></Field>
      <Field className="gap-[3px]"><CheckBox />Yes</Field>
    </div>
    <VLine />
    <div className="ml-[3px] w-[139px]">
      <Field><Title>Selection</Title></Field>
      <div className="flex gap-[5px] items-center">
        <Combo w="w-[80px]" label="Replace" className="border-[#888]" />
        <div className="w-[48px] h-[22px] flex items-center justify-center text-[#a8a8a8] border border-[#c8c8c8] rounded-[4px]">Clear</div>
      </div>
    </div>
    <VLine />
    <div className="ml-[3px] w-[155px] grid grid-cols-[46px_109px]">
      <Field><Title>Query</Title></Field>
      <Field><CheckBox on />Map</Field>
      <span />
      <Field><CheckBox on />Annotations</Field>
    </div>
    <VLine />
    <svg width="16" height="16" viewBox="0 0 16 16" className="ml-[7px] mt-[14px]">
      <circle cx="8" cy="8" r="8" fill="#8a6fb8" />
      <path d="M5.500 6a2.500 2.500 0 115 0c0 1.500-2.500 2-2.500 3.500" stroke="#fff" strokeWidth="1.800" fill="none" />
      <rect x="7" y="11" width="2" height="2" fill="#fff" />
    </svg>
  </div>
);

const sideTop = [
  ['info', true], ['zoom', true], ['ruler', true], ['move'], ['export'], ['split'], ['fit'], ['tree'], ['pinch'], ['up'],
  ['cutbox'], ['addbox'], ['move2'], ['dist'], ['grid'], ['sunlines', true], ['sunpin', true], ['redx', true],
];
const sideBottom = [['lock', 'off'], ['unlock'], ['panel'], ['penx'], ['penx']];
const sideBottom2 = [['boxx'], ['rect', 'off'], ['bottom']];
const sideBottom3 = [['flip', 'off'], ['align', 'off'], ['target', 'off']];

const SideItem = ({ n, arrow }) => (
  <div className="h-[23px] shrink-0 flex items-center pl-[3px]">
    {n === 'move' ? <Move size={18} strokeWidth={2.5} color={P} />
      : n === 'export' ? <SquareArrowOutUpRight size={18} strokeWidth={2.2} color={P} />
        : <Ico n={n} s={18} />}
    {arrow && <span className="ml-[6px]"><Tri c={arrow === 'off' ? '#bcbcbc' : '#000'} /></span>}
  </div>
);

const SideToolbar = () => (
  <div className="w-[41px] shrink-0 flex flex-col bg-[#ededed] pl-[1px] overflow-hidden">
    <div className="h-[5px] shrink-0 mt-[5px] mr-[6px] border-y border-[#c8c8c8]" />
    <div className="w-[23px] h-[22px] mt-[3px] shrink-0 flex items-center justify-center bg-[#dcdce2] border border-[#8d84b4] rounded-[4px]"><Ico n="arrow" s={16} /></div>
    <div className="pl-[1px]">
      {sideTop.map(([n, a]) => <SideItem key={n} n={n} arrow={a} />)}
    </div>
    <div className="h-[4px] shrink-0 mt-[3px] mb-[7px] border-y border-[#c8c8c8]" />
    <div className="pl-[1px]">
      {sideBottom.map(([n, a], i) => <SideItem key={i} n={n} arrow={a} />)}
    </div>
    <div className="h-px w-[26px] shrink-0 mx-[8px] my-[3px] bg-[#c4c4c4]" />
    <div className="pl-[1px]">
      {sideBottom2.map(([n, a]) => <SideItem key={n} n={n} arrow={a} />)}
    </div>
    <div className="h-px w-[26px] shrink-0 mx-[8px] my-[3px] bg-[#c4c4c4]" />
    <div className="pl-[1px]">
      {sideBottom3.map(([n, a]) => <SideItem key={n} n={n} arrow={a} />)}
    </div>
    <div className="w-[36px] h-[24px] mt-[3px] shrink-0 pl-[3px] bg-white border border-[#c4c4c4] rounded-[3px] text-[#777]">0</div>
  </div>
);

const RightWindow = () => (
  <div className="flex-1 min-w-0 h-full flex flex-col overflow-hidden bg-black">
    {/* gnome top bar */}
    <div className="h-[27px] shrink-0 flex items-center pb-[2px] bg-black text-[#e8e8e8] text-[13.7px] whitespace-nowrap">
      <svg width="18" height="14" viewBox="0 0 18 14" className="ml-[12px]">
        <path d="M4 7c0-4 2-6 4-6s3 1 4 1 2 3 2 5c2 1 3 2 3 3 0 2-3 2-6 1S4 9 1 8c0-1 1-1 3-1z" fill="#d8121a" />
      </svg>
      <span className="ml-[2px]">Activities</span>
      <span className="ml-[28px] mr-[5px]">Applications</span>
      <Tri c="#e0e0e0" w={10} h={7} />
      <span className="ml-[22px] mr-[5px] flex gap-px">
        <span className="w-[6px] h-[17px] border border-[#aaa]" />
        <span className="w-[6px] h-[17px] border border-[#aaa]" />
      </span>
      <span className="mr-[5px]">UPFDiagram.6 - Supply Network</span>
      <Tri c="#e0e0e0" w={10} h={7} />
    </div>
    {/* window title */}
    <div className="h-[36px] shrink-0 pl-[607px] flex items-center bg-[#e8e8e7] border-b border-[#c8c8c8] rounded-tl-[6px] text-[14px] text-[#8c8c8c] whitespace-nowrap overflow-hidden">
      Fusion Compiler - BlockWindow.1 - Layout
    </div>
    <div className="h-[24px] shrink-0 flex items-center pl-[1px] pt-px gap-[12.6px] bg-[#ededed] border-b border-[#c4c4c4] whitespace-nowrap">
      <span className="mr-[-7px]"><Ico n="layout" s={17} /></span>
      <span><U>F</U>ile</span>
      <span><U>T</U>ask</span>
      <span><U>E</U>dit</span>
      <span><U>C</U>reate</span>
      <span><U>V</U>iew</span>
      <span><U>S</U>elect</span>
      <span><U>H</U>ighlight</span>
      <span>Sche<U>m</U>atic</span>
      <span><U>W</U>indow</span>
      <span>Help</span>
      <Search size={18} strokeWidth={2.5} color="#6a5aa0" />
    </div>
    <div className="bg-[#ededed]">
      <TopToolbar />
      <ModeBar />
    </div>
    {/* tabs + canvas */}
    <div className="flex-1 min-h-0 flex">
      <SideToolbar />
      <div className="flex-1 min-w-0 flex flex-col">
        <div className="h-[23px] shrink-0 flex bg-white">
          <div className="w-[123px] flex items-center pl-[8px] bg-[#ededed] border border-b-0 border-[#bcbcbc] rounded-t-[4px]">
            <Ico n="layout" s={16} />
            <span className="ml-[9px]">Layout.1</span>
            <X size={12} strokeWidth={3.5} color="#777" className="ml-[12px]" />
          </div>
          <div className="w-[335px] flex items-center pl-[7px] bg-[#c4c4c4] border border-b-0 border-[#b0b0b0] rounded-t-[4px] whitespace-nowrap">
            <Ico n="upf" s={16} />
            <span className="ml-[10px]">UPFDiagram.5 - Power Domain / Root Cell</span>
            <X size={12} strokeWidth={3.5} color="#777" className="ml-[10px]" />
          </div>
          <div className="flex-1 ml-[3px] mt-[8px] h-[9px] flex flex-col justify-between">
            <span className="h-px bg-[#4f3d8a]" />
            <span className="h-px bg-[#4f3d8a]" />
            <span className="h-px bg-[#4f3d8a]" />
            <span className="h-px bg-[#4f3d8a]" />
          </div>
        </div>
        <LayoutCanvas />
      </div>
    </div>
  </div>
);

export default function App() {
  return (
    <div className="w-[1897px] h-[915px] flex overflow-hidden text-[13px] leading-none text-[#1a1a1a] font-['DejaVu_Sans',sans-serif]">
      <LeftDesktop />
      <RightWindow />
    </div>
  );
}
